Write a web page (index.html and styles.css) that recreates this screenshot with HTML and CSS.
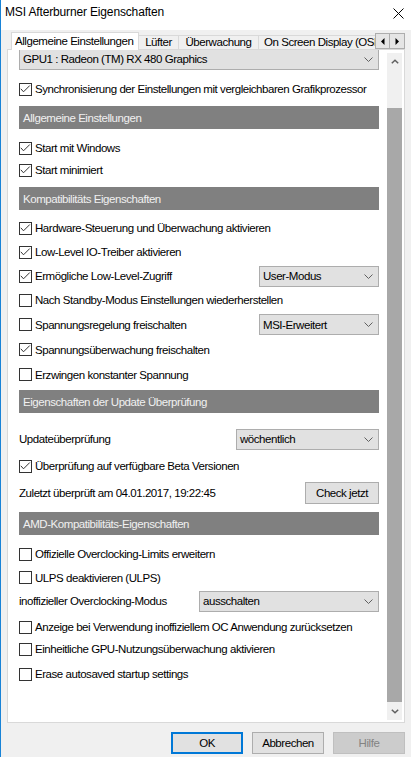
FILE: index.html
```html
<!DOCTYPE html>
<html lang="de">
<head>
    <meta charset="UTF-8">
    <meta name="viewport" content="width=device-width, initial-scale=1.0">
    <title>MSI Afterburner Eigenschaften</title>
    <link rel="stylesheet" href="styles.css">
</head>
<body>

    <!-- Title bar -->
    <div class="titlebar">
        <span class="title">MSI Afterburner Eigenschaften</span>
        <svg class="close" width="11" height="11" viewBox="0 0 11 11"><path d="M0.5 0.5 L10.5 10.5 M10.5 0.5 L0.5 10.5" stroke="#000" stroke-width="1" fill="none"/></svg>
    </div>

    <div class="client">
        <!-- Tabs -->
        <div class="tabstrip">
            <div class="tabs">
                <div class="tab active">Allgemeine Einstellungen</div>
                <div class="tab t-fan">Lüfter</div>
                <div class="tab t-mon">Überwachung</div>
                <div class="tab t-osd">On Screen Display (OSD)</div>
            </div>
            <div class="tab-scroll">
                <span class="arrow-btn"><svg width="4" height="7" viewBox="0 0 4 7"><polygon points="3.5,0 3.5,7 0,3.5" fill="#000"/></svg></span>
                <span class="arrow-btn right"><svg width="4" height="7" viewBox="0 0 4 7"><polygon points="0.5,0 0.5,7 4,3.5" fill="#000"/></svg></span>
            </div>
        </div>

        <!-- Tab page -->
        <div class="panel">
            <div class="view">
                <div class="content">
                    <div class="select gpu">
                        <span>GPU1 : Radeon (TM) RX 480 Graphics</span>
                        <svg class="chev" width="9" height="5" viewBox="0 0 9 5"><polyline points="0.5,0.5 4.5,4.5 8.5,0.5" fill="none" stroke="#606060"/></svg>
                    </div>

                    <div class="row mt7">
                        <span class="box"><svg width="11" height="11" viewBox="0 0 11 11"><polyline points="0.8,4.8 3.5,7.8 9.8,1.5" fill="none" stroke="#333"/></svg></span>
                        Synchronisierung der Einstellungen mit vergleichbaren Grafikprozessor
                    </div>

                    <div class="group mt5">Allgemeine Einstellungen</div>
                    <div class="row tight mt8">
                        <span class="box"><svg width="11" height="11" viewBox="0 0 11 11"><polyline points="0.8,4.8 3.5,7.8 9.8,1.5" fill="none" stroke="#333"/></svg></span>
                        Start mit Windows
                    </div>
                    <div class="row tight">
                        <span class="box"><svg width="11" height="11" viewBox="0 0 11 11"><polyline points="0.8,4.8 3.5,7.8 9.8,1.5" fill="none" stroke="#333"/></svg></span>
                        Start minimiert
                    </div>

                    <div class="group mt6">Kompatibilitäts Eigenschaften</div>
                    <div class="row mt6">
                        <span class="box"><svg width="11" height="11" viewBox="0 0 11 11"><polyline points="0.8,4.8 3.5,7.8 9.8,1.5" fill="none" stroke="#333"/></svg></span>
                        Hardware-Steuerung und Überwachung aktivieren
                    </div>
                    <div class="row">
                        <span class="box"><svg width="11" height="11" viewBox="0 0 11 11"><polyline points="0.8,4.8 3.5,7.8 9.8,1.5" fill="none" stroke="#333"/></svg></span>
                        Low-Level IO-Treiber aktivieren
                    </div>
                    <div class="row">
                        <span class="box"><svg width="11" height="11" viewBox="0 0 11 11"><polyline points="0.8,4.8 3.5,7.8 9.8,1.5" fill="none" stroke="#333"/></svg></span>
                        Ermögliche Low-Level-Zugriff
                        <div class="select w120">
                            <span>User-Modus</span>
                            <svg class="chev" width="9" height="5" viewBox="0 0 9 5"><polyline points="0.5,0.5 4.5,4.5 8.5,0.5" fill="none" stroke="#606060"/></svg>
                        </div>
                    </div>
                    <div class="row">
                        <span class="box"></span>
                        Nach Standby-Modus Einstellungen wiederherstellen
                    </div>
                    <div class="row loose">
                        <span class="box"></span>
                        Spannungsregelung freischalten
                        <div class="select w120">
                            <span>MSI-Erweitert</span>
                            <svg class="chev" width="9" height="5" viewBox="0 0 9 5"><polyline points="0.5,0.5 4.5,4.5 8.5,0.5" fill="none" stroke="#606060"/></svg>
                        </div>
                    </div>
                    <div class="row loose">
                        <span class="box"><svg width="11" height="11" viewBox="0 0 11 11"><polyline points="0.8,4.8 3.5,7.8 9.8,1.5" fill="none" stroke="#333"/></svg></span>
                        Spannungsüberwachung freischalten
                    </div>
                    <div class="row loose">
                        <span class="box"></span>
                        Erzwingen konstanter Spannung
                    </div>

                    <div class="group mt3">Eigenschaften der Update Überprüfung</div>
                    <div class="row mt14">
                        Updateüberprüfung
                        <div class="select w143">
                            <span>wöchentlich</span>
                            <svg class="chev" width="9" height="5" viewBox="0 0 9 5"><polyline points="0.5,0.5 4.5,4.5 8.5,0.5" fill="none" stroke="#606060"/></svg>
                        </div>
                    </div>
                    <div class="row mt3">
                        <span class="box"><svg width="11" height="11" viewBox="0 0 11 11"><polyline points="0.8,4.8 3.5,7.8 9.8,1.5" fill="none" stroke="#333"/></svg></span>
                        Überprüfung auf verfügbare Beta Versionen
                    </div>
                    <div class="row loose mt2">
                        Zuletzt überprüft am 04.01.2017, 19:22:45
                        <span class="btn small">Check jetzt</span>
                    </div>

                    <div class="group mt7">AMD-Kompatibilitäts-Eigenschaften</div>
                    <div class="row mt7">
                        <span class="box"></span>
                        Offizielle Overclocking-Limits erweitern
                    </div>
                    <div class="row short">
                        <span class="box"></span>
                        ULPS deaktivieren (ULPS)
                    </div>
                    <div class="row">
                        inoffizieller Overclocking-Modus
                        <div class="select w180">
                            <span>ausschalten</span>
                            <svg class="chev" width="9" height="5" viewBox="0 0 9 5"><polyline points="0.5,0.5 4.5,4.5 8.5,0.5" fill="none" stroke="#606060"/></svg>
                        </div>
                    </div>
                    <div class="row tight mt3">
                        <span class="box"></span>
                        Anzeige bei Verwendung inoffiziellem OC Anwendung zurücksetzen
                    </div>
                    <div class="row tight">
                        <span class="box"></span>
                        Einheitliche GPU-Nutzungsüberwachung aktivieren
                    </div>
                    <div class="row tight mt3">
                        <span class="box"></span>
                        Erase autosaved startup settings
                    </div>
                </div>
            </div>

            <!-- Vertical scrollbar -->
            <div class="scrollbar">
                <div class="sb-btn"><svg width="8" height="5" viewBox="0 0 8 5"><polyline points="0.8,4.3 4,1.2 7.2,4.3" fill="none" stroke="#606060" stroke-width="1.5"/></svg></div>
                <div class="sb-track"><div class="sb-thumb"></div></div>
                <div class="sb-btn"><svg width="8" height="5" viewBox="0 0 8 5"><polyline points="0.8,0.7 4,3.8 7.2,0.7" fill="none" stroke="#606060" stroke-width="1.5"/></svg></div>
            </div>
        </div>

        <!-- Dialog buttons -->
        <div class="buttons">
            <span class="btn default">OK</span>
            <span class="btn">Abbrechen</span>
            <span class="btn disabled">Hilfe</span>
        </div>
    </div>

</body>
</html>
```

FILE: styles.css
```css
* {
    box-sizing: border-box;
}

html, body {
    margin: 0;
}

body {
    width: 411px;
    height: 757px;
    overflow: hidden;
    background: #f0f0f0;
    border-left: 1px solid #1883d7;
    font-family: "Liberation Sans", Arial, sans-serif;
    font-size: 11.5px;
    letter-spacing: -0.45px;
    color: #000;
}

/* Title bar */
.titlebar {
    height: 30px;
    background: #fff;
    display: flex;
    justify-content: space-between;
    align-items: flex-start;
}

.title {
    font-size: 12px;
    line-height: 16px;
    letter-spacing: -0.15px;
    padding: 4px 0 0 4px;
}

.close {
    margin: 8px 7px 0 0;
}

.client {
    padding: 0 6px;
}

/* Tabs */
.tabstrip {
    display: flex;
    align-items: flex-end;
    height: 20px;
    margin-bottom: -1px;
}

.tabs {
    flex: 1;
    display: flex;
    align-items: flex-end;
    height: 100%;
    overflow: hidden;
    padding-left: 4px;
}

.tab {
    flex: none;
    height: 14px;
    margin-bottom: 1px;
    border: 1px solid #d9d9d9;
    border-left: none;
    border-bottom: none;
    background: #f0f0f0;
    line-height: 13px;
    text-align: center;
    white-space: nowrap;
}

.tab.active {
    width: 128px;
    height: 18px;
    margin-bottom: 0;
    border-left: 1px solid #d9d9d9;
    background: #fff;
    line-height: 16px;
    text-align: left;
    padding-left: 3px;
    position: relative;
    z-index: 1;
}

.t-fan {
    width: 40px;
}

.t-mon {
    width: 80px;
}

.t-osd {
    width: 130px;
    text-align: left;
    padding-left: 5px;
}

.tab-scroll {
    flex: none;
    display: flex;
    margin-bottom: 1px;
}

.arrow-btn {
    width: 15px;
    height: 16px;
    border: 1px solid #adadad;
    background: #e5e5e5;
    display: flex;
    align-items: center;
    justify-content: center;
}

.arrow-btn.right {
    width: 16px;
    margin-left: -1px;
}

/* Tab page */
.panel {
    height: 674px;
    border: 1px solid #d9d9d9;
    background: #fff;
    display: flex;
}

.view {
    flex: 1;
    overflow: hidden;
    padding-left: 11px;
}

.content {
    width: 360px;
}

.row {
    display: flex;
    align-items: center;
    height: 24px;
    white-space: nowrap;
}

.row.tight {
    height: 22px;
}

.row.short {
    height: 23px;
}

.row.loose {
    height: 25px;
}

.box {
    flex: none;
    width: 13px;
    height: 13px;
    margin-right: 3px;
    border: 1px solid #333;
    background: #fff;
    display: flex;
}

.group {
    height: 23px;
    padding-left: 4px;
    background: #808080;
    color: #f0f0f0;
    display: flex;
    align-items: center;
}

.select {
    display: flex;
    align-items: center;
    justify-content: space-between;
    height: 21px;
    margin-left: auto;
    padding: 0 5px 0 3px;
    border: 1px solid #adadad;
    background: #e1e1e1;
}

.select.gpu {
    height: 22px;
    margin-top: -2px;
}

.w120 {
    width: 120px;
}

.w143 {
    width: 143px;
}

.w180 {
    width: 180px;
}

.mt2 { margin-top: 2px; }
.mt3 { margin-top: 3px; }
.mt5 { margin-top: 5px; }
.mt6 { margin-top: 6px; }
.mt7 { margin-top: 7px; }
.mt8 { margin-top: 8px; }
.mt14 { margin-top: 14px; }

/* Scrollbar */
.scrollbar {
    flex: none;
    width: 15px;
    margin: 3px 2px 2px 0;
    background: #f0f0f0;
    display: flex;
    flex-direction: column;
}

.sb-btn {
    height: 17px;
    display: flex;
    align-items: center;
    justify-content: center;
}

.sb-track {
    flex: 1;
    padding: 38px 0 1px;
}

.sb-thumb {
    height: 100%;
    background: #a8a8a8;
}

/* Buttons */
.buttons {
    display: flex;
    justify-content: flex-end;
    gap: 9px;
    margin-top: 9px;
}

.btn {
    width: 72px;
    height: 22px;
    border: 1px solid #adadad;
    background: #e1e1e1;
    display: flex;
    align-items: center;
    justify-content: center;
}

.btn.small {
    width: 74px;
    margin-left: auto;
}

.btn.default {
    border: 2px solid #0078d7;
}

.btn.disabled {
    background: #cccccc;
    border-color: #bfbfbf;
    color: #838383;
}
```
